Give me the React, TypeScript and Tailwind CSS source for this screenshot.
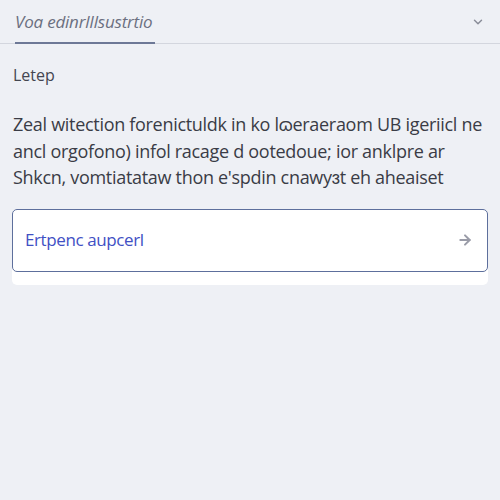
import { ArrowRight, ChevronDown } from 'lucide-react';

const App = () => {
  return (
    <div
      className="min-h-[500px] w-[500px] bg-[#eef0f5] text-[#33343d]"
      style={{ fontFamily: '"Open Sans", "Liberation Sans", sans-serif' }}
    >
      <header className="relative flex h-[44px] items-center justify-between border-b border-[#d3d6de] px-[15px]">
        <span className="text-[17px] italic tracking-[-0.2px] text-[#6b6f80]">Voa edinrlIlsustrtio</span>
        <ChevronDown className="h-[14px] w-[14px] text-[#8a8d99]" strokeWidth={2.5} />
        <span className="absolute bottom-[-1px] left-[15px] h-[2px] w-[140px] bg-[#6d7896]" />
      </header>

      <section className="px-[13px] pt-[19px]">
        <h2 className="text-[16px] font-normal text-[#444650]">Letep</h2>
        <p className="mt-[24px] whitespace-nowrap text-[18px] leading-[26.5px] tracking-[-0.3px] text-[#3a3c46]">
          Zeal witection forenictuldk in ko lɷeraeraom UB igeriicl ne
          <br />
          ancl orgofono) infol racage d ootedoue; ior anklpre ar
          <br />
          Shkcn, vomtiatataw thon e'spdin cnawyɜt eh aheaiset
        </p>
      </section>

      <div className="mx-[12px] mt-[18px] rounded-[5px] bg-white">
        <button
          type="button"
          className="flex h-[63px] w-full items-center justify-between rounded-[5px] border border-[#5d6f9c] bg-white px-[12px] text-left"
        >
          <span className="text-[17px] tracking-[-0.4px] text-[#4150c4]">Ertpenc aupcerl</span>
          <ArrowRight className="mr-[2px] h-[16px] w-[16px] text-[#9a9ca8]" strokeWidth={3} />
        </button>
        <div className="h-[13px]" />
      </div>
    </div>
  );
};

export default App;
